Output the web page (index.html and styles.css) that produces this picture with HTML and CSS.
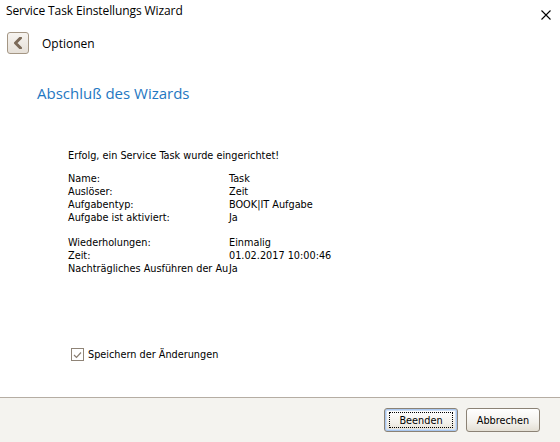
FILE: index.html
```html
<!DOCTYPE html>
<html>
<head>
<meta charset="utf-8">
<link rel="stylesheet" href="styles.css">
</head>
<body>
<div class="window">
  <div class="main">
    <div class="titlebar">
      <span class="title">Service Task Einstellungs Wizard</span>
      <svg class="close" width="10" height="10" viewBox="0 0 10 10"><path d="M0.5 0.5 L9.5 9.5 M9.5 0.5 L0.5 9.5" stroke="#000" stroke-width="1.1" fill="none"/></svg>
    </div>
    <div class="navrow">
      <div class="backbtn">
        <svg width="10" height="12" viewBox="0 0 10 12"><path d="M7.5 1 L2.5 6 L7.5 11" stroke="#7c6a58" stroke-width="3" fill="none" stroke-linecap="round" stroke-linejoin="round"/></svg>
      </div>
      <span class="navlabel">Optionen</span>
    </div>
    <h1 class="heading">Abschluß des Wizards</h1>
    <div class="content">
      <p class="msg">Erfolg, ein Service Task wurde eingerichtet!</p>
      <div class="kv">
        <span>Name:</span><span>Task</span>
        <span>Auslöser:</span><span>Zeit</span>
        <span>Aufgabentyp:</span><span>BOOK|IT Aufgabe</span>
        <span>Aufgabe ist aktiviert:</span><span>Ja</span>
      </div>
      <div class="kv second">
        <span>Wiederholungen:</span><span>Einmalig</span>
        <span>Zeit:</span><span>01.02.2017 10:00:46</span>
        <span class="clip">Nachträgliches Ausführen der Aufgabe</span><span>Ja</span>
      </div>
    </div>
    <label class="check">
      <span class="box"><svg width="9" height="8" viewBox="0 0 9 8"><path d="M1 4 L3.5 6.5 L8 1.5" stroke="#8a7e72" stroke-width="1.2" fill="none"/></svg></span>
      <span>Speichern der Änderungen</span>
    </label>
  </div>
  <div class="footer">
    <button class="btn default"><span class="focus">Beenden</span></button>
    <button class="btn">Abbrechen</button>
  </div>
</div>
</body>
</html>
```
FILE: styles.css
```css
html, body {
  margin: 0;
  padding: 0;
  background: #fff;
}
.window {
  width: 560px;
  height: 442px;
  display: flex;
  flex-direction: column;
  font-family: "Open Sans", "Noto Sans", sans-serif;
  color: #000;
}
.main {
  flex: 1;
  display: flex;
  flex-direction: column;
  border-bottom: 1px solid #b5ada3;
}
.titlebar {
  height: 28px;
  display: flex;
  align-items: flex-start;
  justify-content: space-between;
  padding: 2px 9px 0 6px;
  box-sizing: border-box;
}
.title {
  font-size: 12px;
  line-height: 17px;
  letter-spacing: -0.1px;
}
.close {
  margin-top: 8px;
}
.navrow {
  display: flex;
  align-items: center;
  height: 24px;
  margin-top: 3px;
  padding-left: 7px;
}
.backbtn {
  width: 20px;
  height: 20px;
  border: 1px solid #a49684;
  border-radius: 3px;
  background: linear-gradient(#f7f4f0, #e6e0d8);
  display: flex;
  align-items: center;
  justify-content: center;
}
.navlabel {
  margin-left: 13px;
  font-size: 12px;
}
.heading {
  margin: 28px 0 0 37px;
  font-weight: normal;
  font-size: 15px;
  line-height: 20px;
  color: #1f78c2;
}
.content {
  margin: 46px 0 0 68px;
  font-family: "DejaVu Sans Condensed", "DejaVu Sans", sans-serif;
  font-size: 10.8px;
  line-height: 13px;
}
.msg {
  margin: 0 0 10px;
}
.kv {
  display: grid;
  grid-template-columns: 161px auto;
  justify-content: start;
}
.kv.second {
  margin-top: 12px;
}
.clip {
  white-space: nowrap;
  overflow: hidden;
  width: 160px;
  margin-right: 1px;
}
.check {
  display: flex;
  align-items: center;
  margin: 73px 0 0 71px;
  font-family: "DejaVu Sans Condensed", "DejaVu Sans", sans-serif;
  font-size: 10.8px;
}
.box {
  width: 11px;
  height: 11px;
  border: 1px solid #8f8477;
  background: #fff;
  display: flex;
  align-items: center;
  justify-content: center;
  margin-right: 4px;
}
.footer {
  height: 44px;
  background: #f4f3ef;
  display: flex;
  justify-content: flex-end;
  align-items: center;
  gap: 8px;
  padding-right: 20px;
}
.btn {
  width: 74px;
  height: 24px;
  border: 1px solid #8b8275;
  border-radius: 3px;
  background: linear-gradient(#ffffff, #f3f1ec 60%, #e4dfd4);
  font-family: "DejaVu Sans Condensed", "DejaVu Sans", sans-serif;
  font-size: 10.8px;
  color: #000;
  padding: 0;
  display: flex;
  align-items: center;
  justify-content: center;
}
.btn.default {
  box-shadow: inset 0 0 0 1px #a9c6ee, inset 0 0 0 2px #cfe0f6;
}
.focus {
  border: 1px dotted #000;
  width: 64px;
  height: 16px;
  display: flex;
  align-items: center;
  justify-content: center;
  box-sizing: border-box;
}
```
